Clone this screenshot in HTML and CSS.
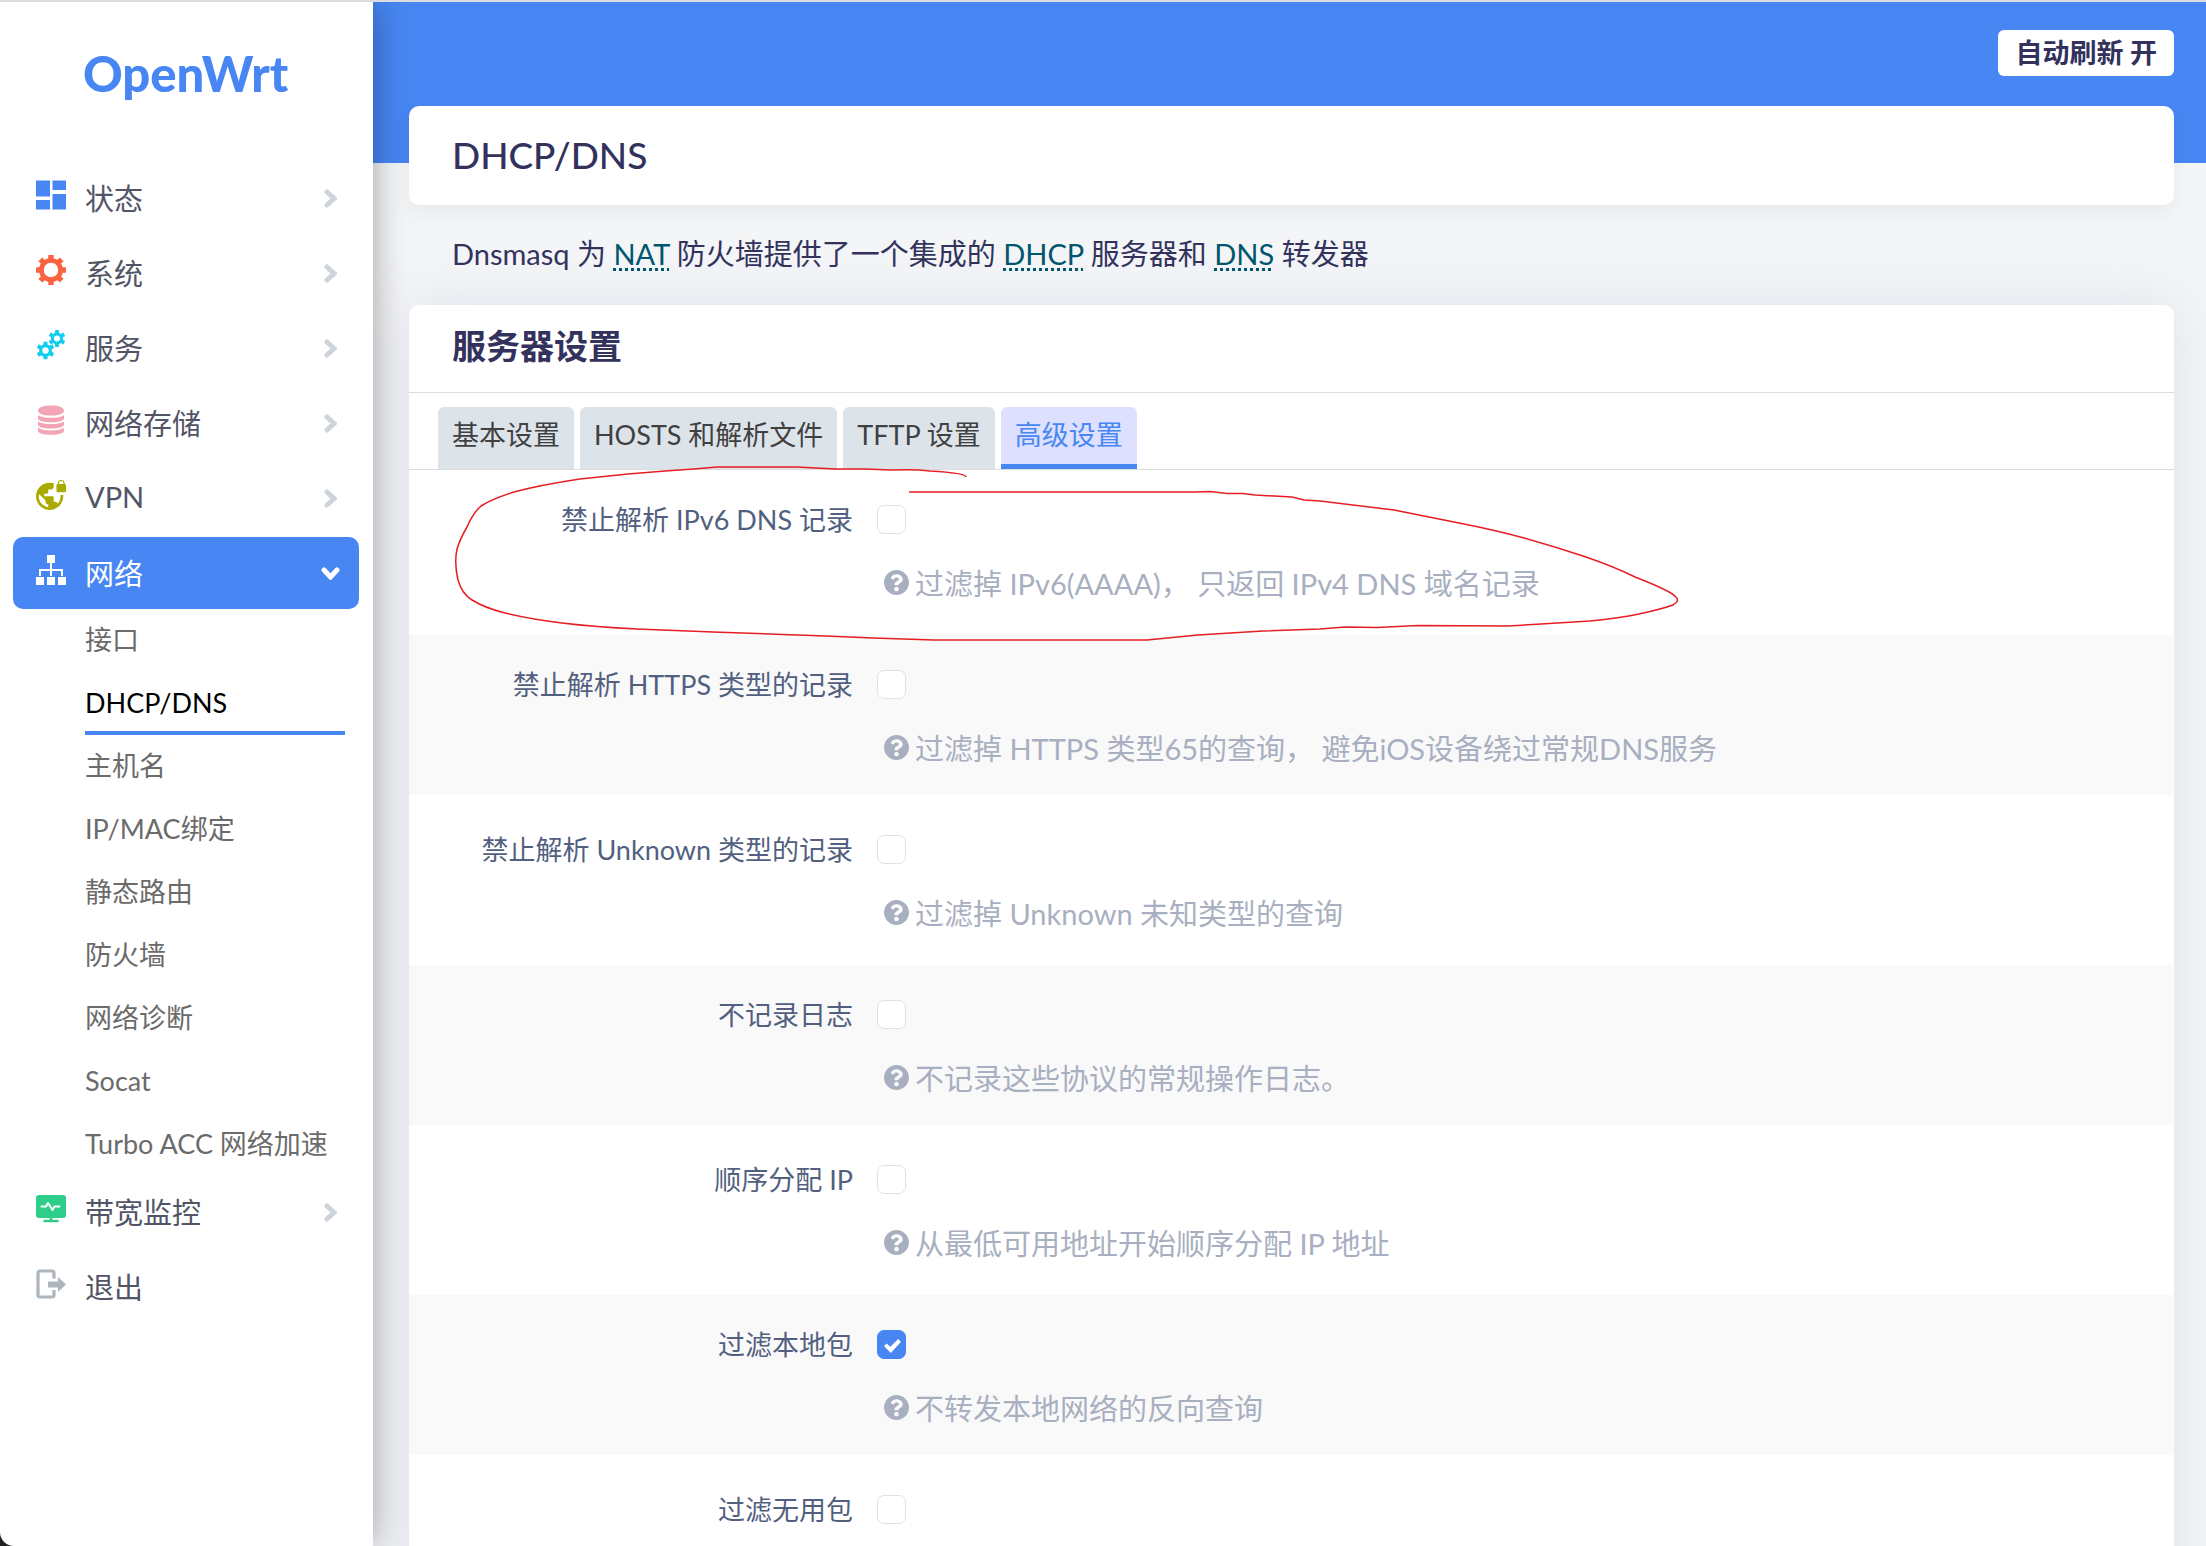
FILE: index.html
```html
<!DOCTYPE html>
<html lang="zh-CN">
<head>
    <meta charset="UTF-8">
    <meta name="viewport" content="width=device-width, initial-scale=1.0">
    <title>OpenWrt - DHCP/DNS</title>
    <link rel="stylesheet" href="styles.css">
</head>
<body>
    <svg class="sprite" aria-hidden="true">
        <symbol id="chevron" viewBox="0 0 13 19">
            <path d="M3 3l7 6.500l-7 6.500" fill="none" stroke="currentColor" stroke-width="5" stroke-linecap="round"/>
        </symbol>
        <symbol id="help" viewBox="8 8 496 496">
            <path fill="currentColor" d="M504 256c0 136.997-111.043 248-248 248S8 392.997 8 256C8 119.083 119.043 8 256 8s248 111.083 248 248zM262.655 90c-54.497 0-89.255 22.957-116.549 63.758-3.536 5.286-2.353 12.415 2.715 16.258l34.699 26.31c5.205 3.947 12.621 3.008 16.665-2.122 17.864-22.658 30.113-35.797 57.303-35.797 20.429 0 45.698 13.148 45.698 32.958 0 14.976-12.363 22.667-32.534 33.976C247.128 238.528 216 254.941 216 296v4c0 6.627 5.373 12 12 12h56c6.627 0 12-5.373 12-12v-1.333c0-28.462 83.186-29.647 83.186-106.667 0-58.002-60.165-102-116.531-102zM256 338c-25.365 0-46 20.635-46 46 0 25.364 20.635 46 46 46s46-20.636 46-46c0-25.364-20.635-46-46-46z"/>
        </symbol>
        <symbol id="cog" viewBox="-9 -9 18 18">
            <circle r="4.800" fill="none" stroke="currentColor" stroke-width="3.200"/>
            <path d="M0-5.500v-3.400M0 5.500v3.400M4.800-2.800l2.900-1.700M-4.800 2.800l-2.900 1.700M4.800 2.800l2.900 1.700M-4.800-2.800l-2.900-1.700" stroke="currentColor" stroke-width="4"/>
        </symbol>
    </svg>

    <div class="layout">
        <div class="sidebar-wrap">
            <aside class="sidebar">
                <a class="brand" href="#">OpenWrt</a>
                <ul class="nav">
                    <li>
                        <a class="nav-link" href="#">
                            <svg class="icon icon-status" viewBox="0 0 30 30"><path fill="currentColor" d="M0 .5h14v16H0zM16.500.5H30v9.500H16.500zM16.500 14H30v15.500H16.500zM0 20h14v9.500H0z"/></svg>
                            <span>状态</span>
                            <svg class="chevron"><use href="#chevron"/></svg>
                        </a>
                    </li>
                    <li>
                        <a class="nav-link" href="#">
                            <svg class="icon icon-system" viewBox="-15 -15 30 30">
                                <circle r="9.600" fill="none" stroke="currentColor" stroke-width="4.800"/>
                                <path d="M0-10.500v3M0 10.500v-3M10.500 0h-3M-10.500 0h3M0-11v-1.200M0 11v1.200M11 0h1.200M-11 0h-1.200M7.800-7.800l1 -1M7.800 7.800l1 1M-7.800 7.800l-1 1M-7.800-7.800l-1-1" stroke="currentColor" stroke-width="5.400" stroke-linecap="square"/>
                                <circle r="7.200" fill="#fff"/>
                            </svg>
                            <span>系统</span>
                            <svg class="chevron"><use href="#chevron"/></svg>
                        </a>
                    </li>
                    <li>
                        <a class="nav-link" href="#">
                            <svg class="icon icon-services" viewBox="0 0 30 30">
                                <use href="#cog" x="0.500" y="11.500" width="18" height="18"/>
                                <use href="#cog" x="12.500" y="0" width="17" height="17"/>
                            </svg>
                            <span>服务</span>
                            <svg class="chevron"><use href="#chevron"/></svg>
                        </a>
                    </li>
                    <li>
                        <a class="nav-link" href="#">
                            <svg class="icon icon-nas" viewBox="0 0 30 30">
                                <path fill="currentColor" d="M2 5.500C2 2.500 7 .5 15 .5s13 2 13 5-5 5-13 5-13-2-13-5zM2 10.200c3 2.200 8 2.600 13 2.600s10-.4 13-2.600v3c0 2.600-6 4-13 4s-13-1.400-13-4zM2 16.500c3 2.200 8 2.600 13 2.600s10-.4 13-2.600v3c0 2.600-6 4-13 4s-13-1.400-13-4zM2 22.800c3 2.200 8 2.600 13 2.600s10-.4 13-2.600v3c0 2.600-6 4-13 4s-13-1.400-13-4z"/>
                            </svg>
                            <span>网络存储</span>
                            <svg class="chevron"><use href="#chevron"/></svg>
                        </a>
                    </li>
                    <li>
                        <a class="nav-link" href="#">
                            <svg class="icon icon-vpn" viewBox="1 1 22 22"><path fill="currentColor" d="M22 4v-.5a2.500 2.500 0 0 0-5 0V4c-.55 0-1 .45-1 1v4c0 .55.45 1 1 1h5c.55 0 1-.45 1-1V5c0-.55-.45-1-1-1zm-.8 0h-3.400v-.5a1.700 1.700 0 0 1 3.400 0V4zm-2.280 8c.04.33.08.66.08 1 0 2.080-.8 3.970-2.100 5.390-.26-.81-1-1.390-1.900-1.390h-1v-3c0-.55-.45-1-1-1H7v-2h2c.55 0 1-.45 1-1V8h2c1.100 0 2-.9 2-2V3.460c-.95-.3-1.950-.46-3-.46C5.480 3 1 7.480 1 13s4.480 10 10 10 10-4.480 10-10c0-.34-.02-.67-.05-1h-2.030zM10 20.930c-3.950-.49-7-3.850-7-7.930 0-.62.08-1.210.21-1.790L8 16v1c0 1.100.9 2 2 2v1.930z"/></svg>
                            <span>VPN</span>
                            <svg class="chevron"><use href="#chevron"/></svg>
                        </a>
                    </li>
                    <li class="expanded">
                        <a class="nav-link active" href="#">
                            <svg class="icon" viewBox="0 0 30 30">
                                <path fill="currentColor" d="M11 0h8v8h-8zM0 22h8v8H0zM11 22h8v8h-8zM22 22h8v8h-8z"/>
                                <path d="M15 8v13M4 21v-6h22v6" fill="none" stroke="currentColor" stroke-width="2"/>
                            </svg>
                            <span>网络</span>
                            <svg class="chevron open"><use href="#chevron"/></svg>
                        </a>
                        <ul class="subnav">
                            <li><a href="#">接口</a></li>
                            <li><a class="active" href="#">DHCP/DNS</a></li>
                            <li><a href="#">主机名</a></li>
                            <li><a href="#">IP/MAC绑定</a></li>
                            <li><a href="#">静态路由</a></li>
                            <li><a href="#">防火墙</a></li>
                            <li><a href="#">网络诊断</a></li>
                            <li><a href="#">Socat</a></li>
                            <li><a href="#">Turbo ACC 网络加速</a></li>
                        </ul>
                    </li>
                    <li>
                        <a class="nav-link" href="#">
                            <svg class="icon icon-monitor" viewBox="0 0 30 30">
                                <rect y="1" width="30" height="23" rx="3" fill="currentColor"/>
                                <path d="M15 24v3M8.500 27h13" stroke="currentColor" stroke-width="2.600" stroke-linecap="round"/>
                                <path d="M5.500 12.500h4.500l2-3.500 4.500 7 2-3.500h5" fill="none" stroke="#fff" stroke-width="2" stroke-linecap="round" stroke-linejoin="round"/>
                            </svg>
                            <span>带宽监控</span>
                            <svg class="chevron"><use href="#chevron"/></svg>
                        </a>
                    </li>
                    <li>
                        <a class="nav-link" href="#">
                            <svg class="icon icon-logout" viewBox="0 0 30 30">
                                <path d="M18 9.500V4q0-2-2-2H4Q2 2 2 4v22q0 2 2 2h12q2 0 2-2v-5" fill="none" stroke="currentColor" stroke-width="3.200"/>
                                <path fill="currentColor" d="M12 12.500h10V8l8 7.500-8 7.500v-4.500H12z"/>
                            </svg>
                            <span>退出</span>
                        </a>
                    </li>
                </ul>
            </aside>
        </div>

        <main class="main">
            <header class="topbar">
                <button class="refresh" type="button">自动刷新 开</button>
            </header>

            <section class="card title-card">
                <h2>DHCP/DNS</h2>
            </section>

            <p class="description">Dnsmasq 为 <abbr>NAT</abbr> 防火墙提供了一个集成的 <abbr>DHCP</abbr> 服务器和 <abbr>DNS</abbr> 转发器</p>

            <section class="card settings">
                <h3>服务器设置</h3>
                <ul class="tabs">
                    <li><a href="#">基本设置</a></li>
                    <li><a href="#">HOSTS 和解析文件</a></li>
                    <li><a href="#">TFTP 设置</a></li>
                    <li><a class="active" href="#">高级设置</a></li>
                </ul>
                <form class="options">
                    <div class="option">
                        <label for="filter-aaaa">禁止解析 IPv6 DNS 记录</label>
                        <div class="field">
                            <input type="checkbox" id="filter-aaaa">
                            <p class="help"><svg><use href="#help"/></svg>过滤掉 IPv6(AAAA)， 只返回 IPv4 DNS 域名记录</p>
                        </div>
                    </div>
                    <div class="option">
                        <label for="filter-https">禁止解析 HTTPS 类型的记录</label>
                        <div class="field">
                            <input type="checkbox" id="filter-https">
                            <p class="help"><svg><use href="#help"/></svg>过滤掉 HTTPS 类型65的查询， 避免iOS设备绕过常规DNS服务</p>
                        </div>
                    </div>
                    <div class="option">
                        <label for="filter-unknown">禁止解析 Unknown 类型的记录</label>
                        <div class="field">
                            <input type="checkbox" id="filter-unknown">
                            <p class="help"><svg><use href="#help"/></svg>过滤掉 Unknown 未知类型的查询</p>
                        </div>
                    </div>
                    <div class="option">
                        <label for="quietdhcp">不记录日志</label>
                        <div class="field">
                            <input type="checkbox" id="quietdhcp">
                            <p class="help"><svg><use href="#help"/></svg>不记录这些协议的常规操作日志。</p>
                        </div>
                    </div>
                    <div class="option">
                        <label for="sequential-ip">顺序分配 IP</label>
                        <div class="field">
                            <input type="checkbox" id="sequential-ip">
                            <p class="help"><svg><use href="#help"/></svg>从最低可用地址开始顺序分配 IP 地址</p>
                        </div>
                    </div>
                    <div class="option">
                        <label for="boguspriv">过滤本地包</label>
                        <div class="field">
                            <input type="checkbox" id="boguspriv" checked>
                            <p class="help"><svg><use href="#help"/></svg>不转发本地网络的反向查询</p>
                        </div>
                    </div>
                    <div class="option">
                        <label for="filterwin2k">过滤无用包</label>
                        <div class="field">
                            <input type="checkbox" id="filterwin2k">
                        </div>
                    </div>

                    <!-- hand-drawn mark round the first option -->
                    <svg class="mark" viewBox="409 470 1300 180" aria-hidden="true">
                        <path d="M966 477Q966 473 930 471Q915 469 892 470L864 469L835 469L797 467H717L694 469L665 471L628 474L580 479Q540 485 514 492Q492 499 481 506Q473 513 467 527Q460 539 457 549Q454 563 458 580Q462 594 472 600Q485 608 505 613Q530 619 562 623Q595 627 637 629L713 632L826 636L873 638L934 640H1147L1198 635L1263 631L1320 629L1345 627L1377 627.500L1418 625.500L1508 626L1541 624L1590 621Q1620 618 1639 614Q1662 609 1673 605Q1680 601 1676 597Q1671 591 1635 577Q1615 567 1586 557Q1556 547 1524 538Q1495 530 1459 523L1394 510L1320 501L1304 500L1292 497L1255 495L1243 493.500H1227L1210 491.500L1194 492H909"/>
                    </svg>
                </form>
            </section>
        </main>
    </div>
</body>
</html>
```
FILE: styles.css
```css
* {
    box-sizing: border-box;
}

body {
    margin: 0;
    font-family: Lato, "Noto Sans CJK SC", sans-serif;
    font-size: 27px;
    font-weight: 400;
    color: #32325d;
    background-color: #f4f5f7;
}

ul {
    list-style: none;
    margin: 0;
    padding: 0;
}

a {
    text-decoration: none;
}

.sprite {
    display: none;
}

.layout {
    display: flex;
    height: 100vh;
    overflow: hidden;
    border-top: 2px solid #dcdddf;
}

/* Sidebar */
.sidebar-wrap {
    flex: 0 0 373px;
    z-index: 2;
    background-color: #222;
    box-shadow: 0 0 32px rgba(0, 0, 0, 0.35);
}

.sidebar {
    height: 100%;
    padding: 0 14px 0 13px;
    background-color: #fff;
    border-bottom-left-radius: 14px;
}

.brand {
    display: block;
    height: 160px;
    padding: 41px 0 0 70px;
    font-size: 49px;
    font-weight: 900;
    line-height: 60px;
    color: #4786f3;
}

.nav > li {
    margin-bottom: 3px;
}

.nav > .expanded {
    margin-bottom: 0;
}

.nav-link {
    display: flex;
    align-items: center;
    height: 72px;
    padding: 0 18px 3px 23px;
    font-size: 29px;
    color: #525566;
    border-radius: 10px;
}

.nav-link span {
    flex: 1;
    margin-left: 19px;
}

.nav-link.active {
    color: #fff;
    background-color: #4786f3;
}

.icon {
    width: 30px;
    height: 30px;
    margin-bottom: 4px;
}

.icon-status { color: #4786f3; }
.icon-system { color: #fb6340; }
.icon-services { color: #11cdef; }
.icon-nas { color: #f3a4b5; }
.icon-vpn { color: #aaab00; }
.icon-monitor { color: #2dce89; }
.icon-logout { color: #adb5bd; }

.chevron {
    width: 13px;
    height: 19px;
    margin: 3px 4px 0 0;
    color: #ced4da;
}

.chevron.open {
    color: #fff;
    transform: rotate(90deg);
}

.subnav {
    margin: 0 1px 0 72px;
    padding-right: 13px;
}

.subnav a {
    display: block;
    height: 63px;
    line-height: 61px;
    white-space: nowrap;
    color: #6b6b6b;
}

.subnav a.active {
    color: #000;
    box-shadow: inset 0 -4px #4786f3;
}

/* Content */
.main {
    flex: 1;
    min-width: 0;
    padding: 0 32px 0 36px;
    background: linear-gradient(#4786f3, #4786f3) 0 0 / 100% 161px no-repeat;
}

.topbar {
    display: flex;
    justify-content: flex-end;
    padding: 28px 0 30px;
}

.refresh {
    height: 46px;
    padding: 0 17px;
    font-family: inherit;
    font-size: 27px;
    font-weight: 700;
    line-height: 46px;
    color: #32325d;
    background-color: #fff;
    border: none;
    border-radius: 6px;
}

.card {
    background-color: #fff;
    border-radius: 10px;
}

.title-card {
    box-shadow: 0 8px 20px rgba(0, 0, 0, 0.05);
}

.title-card h2 {
    margin: 0;
    padding: 0 43px 2px;
    font-size: 37px;
    font-weight: 500;
    line-height: 97px;
}

.description {
    margin: 0;
    padding: 0 43px 2px;
    font-size: 29px;
    line-height: 98px;
}

.description abbr {
    color: #00566d;
    text-decoration: underline dotted 3px;
    text-underline-offset: 3px;
}

.settings {
    box-shadow: 0 0 56px rgba(136, 152, 190, 0.2);
}

.settings h3 {
    margin: 0;
    padding: 0 43px 6px;
    font-size: 34px;
    font-weight: 700;
    line-height: 81px;
    border-bottom: 1px solid #dcdddf;
}

.tabs {
    display: flex;
    gap: 6px;
    padding: 14px 29px 0;
    border-bottom: 1px solid #dcdddf;
}

.tabs a {
    display: block;
    height: 62px;
    padding: 0 14px;
    line-height: 55px;
    color: #404040;
    background-color: #dce3e9;
    border-radius: 6px 6px 0 0;
}

.tabs a.active {
    color: #4786f3;
    background-color: #dde0ff;
    border-bottom: 5px solid #4786f3;
}

.options {
    position: relative;
}

.option {
    display: grid;
    grid-template-columns: 444px 1fr;
    gap: 24px;
    height: 160px;
    margin: 5px 0;
    padding-top: 30px;
    color: #525f7f;
}

.option:first-child {
    margin-top: 0;
}

.option:nth-child(even) {
    background-color: #f9f9f9;
}

.option label {
    text-align: right;
    line-height: 39px;
}

.option input {
    appearance: none;
    display: block;
    width: 29px;
    height: 29px;
    margin: 5px 0 28px;
    background-color: #fff;
    border: 1px solid #dee2e6;
    border-radius: 7px;
}

.option input:checked {
    background-color: #4786f3;
    border-color: #4786f3;
}

.option input:checked::before {
    content: "";
    display: block;
    width: 17px;
    height: 14px;
    margin: 8px 0 0 6px;
    background-color: #fff;
    clip-path: polygon(0 50%, 15% 32%, 37% 55%, 83% 0, 100% 20%, 40% 100%);
}

.help {
    display: flex;
    align-items: center;
    margin: 0;
    padding-left: 7px;
    font-size: 29px;
    line-height: 44px;
    color: #a8afc0;
    white-space: pre;
}

.help svg {
    width: 25px;
    height: 25px;
    margin: 0 6px 4px 0;
}

/* Red pen mark, lies over the rows */
.mark {
    position: absolute;
    top: 0;
    left: 0;
    width: 1300px;
    height: 180px;
    overflow: visible;
    fill: none;
    stroke: #e61e23;
    stroke-width: 1.5px;
    pointer-events: none;
}
```
